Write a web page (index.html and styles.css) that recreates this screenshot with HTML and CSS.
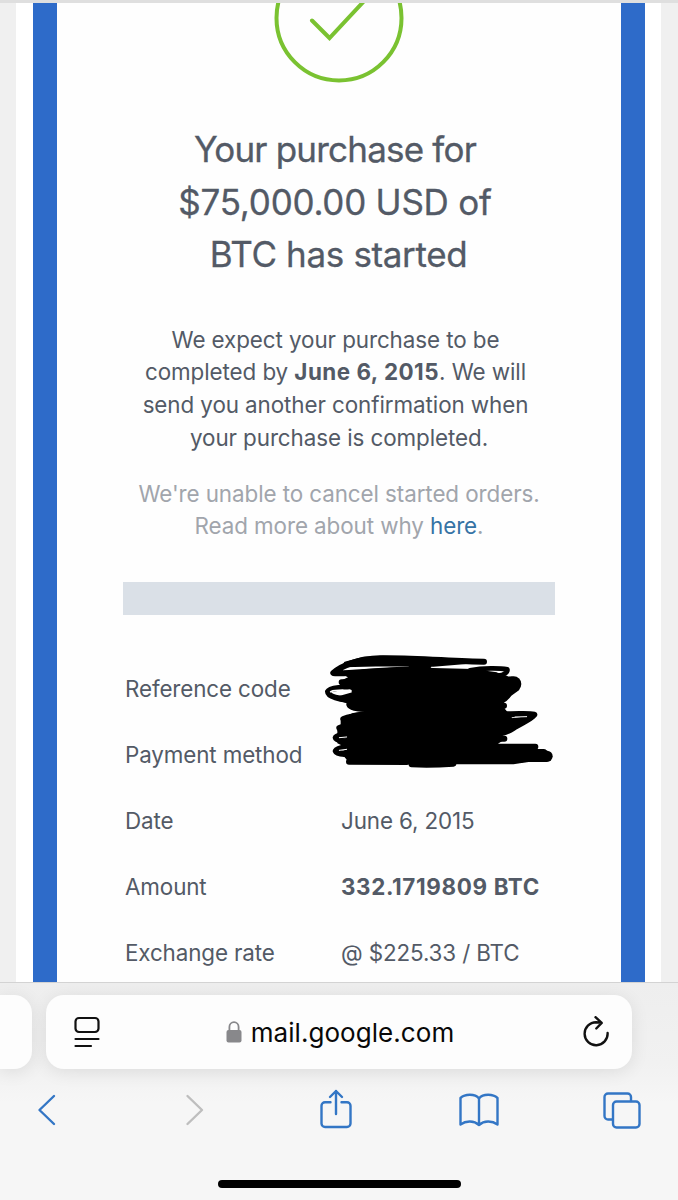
FILE: index.html
```
<!DOCTYPE html>
<html lang="en">
<head>
    <meta charset="UTF-8">
    <meta name="viewport" content="width=device-width, initial-scale=1.0">
    <title>mail.google.com</title>
    <link rel="stylesheet" href="styles.css">
</head>
<body>
    <main class="page">
        <div class="email">
            <div class="card">
                <svg class="check" width="132" height="80" viewBox="0 0 132 80" fill="none" stroke="#7ac231" stroke-width="4">
                    <circle cx="66" cy="15" r="62.5"/>
                    <path d="M39 17.5 56.5 35 93 -4" stroke-linecap="round"/>
                </svg>
                <h1><span class="h-1">Your purchase for</span><br><span class="h-2">$75,000.00 USD of</span><br><span class="h-3">BTC has started</span></h1>
                <p class="intro"><span class="nudge">We expect your purchase to be</span><br><span class="nudge">completed by <strong>June 6, 2015</strong>. We will</span><br><span class="nudge">send you another confirmation when</span><br>your purchase is completed.</p>
                <p class="note">We're unable to cancel started orders.<br>Read more about why <a href="#">here</a>.</p>
                <div class="divider"></div>
                <dl class="details">
                    <dt>Reference code</dt><dd></dd>
                    <dt>Payment method</dt><dd></dd>
                    <dt>Date</dt><dd>June 6, 2015</dd>
                    <dt>Amount</dt><dd class="amount">332.1719809 BTC</dd>
                    <dt>Exchange rate</dt><dd class="rate">@ $225.33 / BTC</dd>
                </dl>
                <!-- marker scribble over the private values -->
                <svg class="scribble" width="270" height="140" viewBox="0 0 810 420" stroke="#000" stroke-linecap="round" stroke-linejoin="round">
                    <path d="M130 100 200 90 320 84 400 87 520 90 590 100 630 114 655 120 655 148 628 168 605 188 612 208 622 220 645 250 596 280 612 296 590 310 600 320 710 335 748 348 690 362 640 370 320 370 150 366 135 348 120 340 150 325 115 308 150 298 115 285 115 268 125 255 125 238 160 222 215 213 160 205 150 190 105 175 158 160 158 142 122 126 150 112Z" stroke-width="6"/>
                    <path d="M135 68 190 53 250 50 400 58 550 64 490 70 400 77 260 76 130 79Z" stroke-width="6"/>
                    <g fill="none" stroke-width="18">
                        <path d="M552 65C470 65 330 52 240 55 175 57 125 76 100 99 125 104 215 92 340 88"/>
                        <path d="M330 80H390" stroke-width="8"/>
                        <path d="M510 91C550 83 600 84 622 88 625 98 610 105 595 107" stroke-width="14"/>
                        <path d="M150 127H125C175 124 230 130 260 137 160 142 90 139 84 155 84 174 140 181 190 183"/>
                        <path d="M635 132H641" stroke-width="46"/>
                        <path d="M628 158C621 176 598 188 570 195M612 197H570"/>
                        <path d="M148 194C152 207 190 205 230 211M130 237C170 222 220 225 260 225M118 264C150 250 200 245 260 240"/>
                        <path d="M200 276C150 278 109 285 107 293 109 306 160 304 210 309"/>
                        <path d="M210 320C155 316 112 323 107 333 112 347 170 342 220 342"/>
                        <path d="M147 365 320 366M335 373C370 375 420 374 460 371"/>
                        <path d="M600 222C650 224 685 220 703 224 690 240 660 250 640 264 620 278 590 284 570 287M600 248 680 238"/>
                        <path d="M570 296H613M590 320H706"/>
                        <path d="M640 342H730" stroke-width="30"/>
                        <path d="M640 349H741" stroke-width="34"/>
                    </g>
                    <path d="M92 155C110 148 130 152 150 150" fill="none" stroke="#fff" stroke-width="5"/>
                    <path d="M118 293 140 291M118 331 140 328M645 231 680 230" fill="none" stroke="#fff" stroke-width="3"/>
                </svg>
            </div>
        </div>
    </main>

    <footer class="toolbar">
        <div class="tabs">
            <div class="tab-prev"></div>
            <div class="address">
                <svg width="28" height="32" viewBox="0 0 28 32" fill="none" stroke="#111" stroke-width="2.2" stroke-linecap="round">
                    <rect x="2.5" y="2" width="23" height="14" rx="3.5"/>
                    <path d="M2.5 23H25.5M2.5 30H18"/>
                </svg>
                <div class="site">
                    <svg width="16" height="22" viewBox="0 0 16 22">
                        <path d="M3.4 10V6a4.6 4.9 0 0 1 9.2 0v4" fill="none" stroke="#88888b" stroke-width="1.8"/>
                        <rect x=".5" y="9" width="15" height="12.5" rx="2" fill="#88888b"/>
                    </svg>
                    <span>mail.google.com</span>
                </div>
                <svg width="28" height="32" viewBox="0 0 28 32" fill="none" stroke="#111" stroke-width="2.4" stroke-linecap="round" stroke-linejoin="round">
                    <path d="M25.6 17A11.5 11.5 0 1 1 14.1 6.2L19.5 6.8M13.5 1.2 19.7 6.9 14.3 12.5"/>
                </svg>
            </div>
        </div>
        <nav class="actions">
            <svg class="back" width="20" height="32" viewBox="0 0 20 32"><path d="M17 2 2.5 16 17 30"/></svg>
            <svg class="forward" width="20" height="32" viewBox="0 0 20 32"><path d="M2.5 2 17 16 2.5 30"/></svg>
            <svg class="share" width="32" height="40" viewBox="0 0 32 40"><path d="M10.5 13.2H5A3.5 3.5 0 0 0 1.5 16.7V34.5A3.5 3.5 0 0 0 5 38H27A3.5 3.5 0 0 0 30.5 34.5V16.7A3.5 3.5 0 0 0 27 13.2H21.5M16 25V2M10 8 16 2 22 8"/></svg>
            <svg class="book" width="40" height="34" viewBox="0 0 40 34"><path d="M20 32C15 27.5 7 27.5 1.5 31.5V5C6 .8 16 .5 20 5.5 24 .5 34 .8 38.5 5V31.5C33 27.5 25 27.5 20 32ZM20 5.5V32"/></svg>
            <svg class="windows" width="38" height="37" viewBox="0 0 38 37"><path d="M9 27.5H5A3.5 3.5 0 0 1 1.5 24V5A3.5 3.5 0 0 1 5 1.5H24.5A3.5 3.5 0 0 1 28 5V9"/><rect x="10" y="9.5" width="26.5" height="26" rx="3.5"/></svg>
        </nav>
        <div class="home-bar"></div>
    </footer>
</body>
</html>
```
FILE: styles.css
```
/* General Styles */
* {
    box-sizing: border-box;
}

body {
    margin: 0;
    height: 1200px;
    display: flex;
    flex-direction: column;
    overflow: hidden;
    font-family: Inter, sans-serif;
    color: #535a66;
    background-color: #f6f6f6;
}

/* Email */
.page {
    height: 982px;
    padding: 0 17px 0 16px;
    border-top: 3px solid #dfdfdf;
    background-color: #f0f0f0;
    overflow: hidden;
}

.email {
    height: 979px;
    padding: 0 16px 0 17px;
    background-color: #fff;
}

.card {
    position: relative;
    height: 100%;
    padding: 0 65px;
    border: solid #2e6bc9;
    border-width: 0 24px;
    background-color: #fefefe;
    text-align: center;
}

.check {
    display: block;
    margin: 0 auto;
}

h1 {
    margin: 40px -20px 0 -28px;
    font-size: 35px;
    font-weight: 400;
    line-height: 52.5px;
    letter-spacing: -0.25px;
    -webkit-text-stroke: 0.3px #535a66;
}

.h-1 {
    letter-spacing: -0.8px;
}

.h-3 {
    padding-left: 7px;
    letter-spacing: -0.35px;
}

.intro, .note {
    margin: 43px -20px 0;
    font-size: 22.4px;
    line-height: 32.8px;
    letter-spacing: -0.08px;
}

.intro strong {
    letter-spacing: 0.5px;
}

/* the first lines sit slightly left of centre */
.nudge {
    padding-right: 7px;
}

.note {
    margin-top: 23px;
    color: #a1a5ac;
}

.note a {
    color: #3673a5;
    text-decoration: none;
}

.divider {
    height: 33px;
    margin: 39px 1px 0 1px;
    background-color: #dae0e7;
}

.details {
    display: grid;
    grid-template-columns: 216px 1fr;
    grid-auto-rows: 66px;
    align-items: center;
    margin: 40px -20px 0 3px;
    text-align: left;
    font-size: 22.4px;
    letter-spacing: -0.12px;
    white-space: nowrap;
}

.details dd {
    margin: 0;
}

.details .amount {
    font-weight: 700;
    letter-spacing: 0.65px;
}

.scribble {
    position: absolute;
    left: 243px;
    top: 637px;
}

/* Browser toolbar */
.toolbar {
    height: 218px;
    border-top: 1px solid #d3d3d3;
    background: linear-gradient(#eeeeee, #f1f1f1 80px, #f6f6f6 120px);
}

.tabs {
    display: flex;
    gap: 14px;
    padding-top: 12px;
}

.tab-prev, .address {
    height: 74px;
    background-color: #fdfdfd;
    box-shadow: 0 3px 18px rgba(0, 0, 0, 0.09);
}

.tab-prev {
    width: 32px;
    border-radius: 0 18px 18px 0;
}

.address {
    display: flex;
    align-items: center;
    justify-content: space-between;
    width: 586px;
    padding: 0 22px 0 27px;
    border-radius: 18px;
}

.site {
    display: flex;
    align-items: center;
    gap: 9px;
    padding-right: 3px;
    color: #080808;
    font-size: 26px;
    letter-spacing: 0.05px;
}

.actions {
    display: grid;
    grid-template-columns: repeat(5, 1fr);
    align-items: center;
    justify-items: center;
    height: 82px;
    margin: 0 -25px;
    fill: none;
    stroke: #3376c5;
    stroke-width: 2.4;
    stroke-linecap: round;
    stroke-linejoin: round;
}

.back {
    margin-right: 2px;
}

.forward {
    margin-left: 3px;
    stroke: #bebebe;
}

.share {
    margin: -2px 0 0 -6px;
}

.book {
    margin-right: 12px;
}

.windows {
    margin-right: 16px;
}

.home-bar {
    width: 243px;
    height: 8px;
    margin: 29px auto 0;
    border-radius: 4px;
    background-color: #000;
}
```
